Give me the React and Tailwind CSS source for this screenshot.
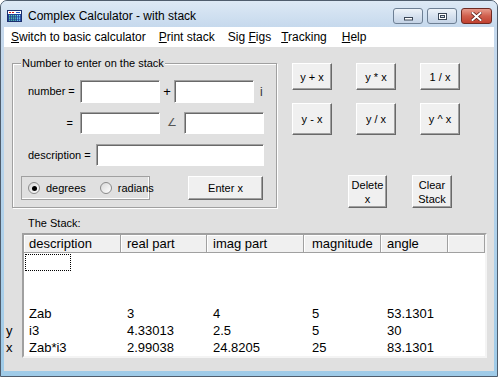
import React from 'react';

const font = "font-['Liberation_Sans',Arial,sans-serif]";
const raised =
  'bg-[#f0f0f0] border border-t-white border-l-white border-r-[#696969] border-b-[#696969] shadow-[inset_-1px_-1px_0_#a0a0a0]';
const sunken =
  'bg-white border border-t-[#a0a0a0] border-l-[#a0a0a0] border-r-white border-b-white shadow-[inset_1px_1px_0_#696969]';

const columns = [
  { title: 'description', w: 'w-[97px]', pl: 'pl-[5px]' },
  { title: 'real part', w: 'w-[86px]', pl: 'pl-[6px]' },
  { title: 'imag part', w: 'w-[97px]', pl: 'pl-[6px]' },
  { title: 'magnitude', w: 'w-[77px]', pl: 'pl-[8px]' },
  { title: 'angle', w: 'w-[67px]', pl: 'pl-[6px]' },
  { title: '', w: 'flex-1', pl: '' },
];

const stack = [
  ['Zab', '3', '4', '5', '53.1301'],
  ['i3', '4.33013', '2.5', '5', '30'],
  ['Zab*i3', '2.99038', '24.8205', '25', '83.1301'],
];

function AppIcon() {
  return (
    <svg width="15" height="12" viewBox="0 0 15 12" className="mr-[6px]">
      <rect x="0.5" y="0.5" width="14" height="11" fill="#1f3f9a" stroke="#1b2f6e" />
      <rect x="1" y="1" width="13" height="3" fill="#ffffff" />
      <rect x="2" y="2" width="2" height="1" fill="#d02020" />
      <rect x="5" y="2" width="2" height="1" fill="#d02020" />
      <rect x="9" y="2" width="4" height="1" fill="#2050c0" />
      {[0, 1, 2, 3].map((r) =>
        [0, 1, 2, 3, 4, 5].map((c) => (
          <rect key={r + '-' + c} x={2 + c * 2} y={5 + r * 1.6} width="1.2" height="1" fill={c > 3 ? '#7fe0ff' : '#5fd0a0'} />
        ))
      )}
    </svg>
  );
}

function CaptionButton({ kind }) {
  const base = 'h-[16px] flex items-center justify-center rounded-[3px] border';
  if (kind === 'close') {
    return (
      <div className={`${base} w-[31px] border-[#6e2a22] bg-gradient-to-b from-[#e69a8c] via-[#d0604e] to-[#c04030]`}>
        <svg width="11" height="9" viewBox="0 0 11 9">
          <path d="M1.5 1 L9.5 8 M9.5 1 L1.5 8" stroke="#5a1a14" strokeWidth="3.4" strokeLinecap="square" />
          <path d="M1.5 1 L9.5 8 M9.5 1 L1.5 8" stroke="#ffffff" strokeWidth="2" strokeLinecap="square" />
        </svg>
      </div>
    );
  }
  return (
    <div className={`${base} w-[30px] border-[#6d7f94] bg-gradient-to-b from-[#eef3f9] via-[#d7e2ef] to-[#c4d3e6]`}>
      {kind === 'min' ? (
        <svg width="11" height="9" viewBox="0 0 11 9">
          <rect x="1.5" y="5.5" width="8" height="2.5" fill="#ffffff" stroke="#3a4656" />
        </svg>
      ) : (
        <svg width="11" height="9" viewBox="0 0 11 9">
          <rect x="1.5" y="1.5" width="8" height="6" fill="none" stroke="#3a4656" />
          <rect x="2.5" y="2.5" width="6" height="4" fill="none" stroke="#ffffff" />
          <rect x="3.5" y="3.5" width="4" height="2" fill="none" stroke="#3a4656" />
        </svg>
      )}
    </div>
  );
}

function Btn({ className, children }) {
  return (
    <div className={`${raised} ${className} flex flex-col items-center justify-center text-[11px] leading-[14px] text-black`}>
      {children}
    </div>
  );
}

function Radio({ checked, label }) {
  return (
    <div className="flex items-center">
      <div className="w-[12px] h-[12px] rounded-full border border-[#8a8a8a] bg-gradient-to-br from-[#d8d8d8] to-white flex items-center justify-center">
        {checked && <div className="w-[5px] h-[5px] rounded-full bg-black" />}
      </div>
      <span className="ml-[6px] text-[11px]">{label}</span>
    </div>
  );
}

export default function App() {
  return (
    <div className={`${font} w-[498px] h-[377px] flex flex-col border border-[#4f5d6d] rounded-t-[7px] overflow-hidden bg-[#bcd4ec] text-black`}>
      {/* title bar */}
      <div className="h-[26px] pt-[4px] flex items-center pl-[6px] pr-[5px] bg-gradient-to-b from-[#dde9f5] to-[#c6d9ed]">
        <AppIcon />
        <span className="text-[12px] text-black">Complex Calculator - with stack</span>
        <div className="ml-auto flex items-center gap-[4px]">
          <CaptionButton kind="min" />
          <CaptionButton kind="max" />
          <CaptionButton kind="close" />
        </div>
      </div>

      <div className="flex-1 flex flex-col px-[3px] pb-[5px] bg-gradient-to-b from-[#c6d9ed] to-[#9fcbe8]">
        {/* menu */}
        <div className="h-[20px] bg-white flex items-center text-[12px] leading-[20px] pl-[7px]">
          <span><u>S</u>witch to basic calculator</span>
          <span className="ml-[13px]"><u>P</u>rint stack</span>
          <span className="ml-[13px]">Sig <u>F</u>igs</span>
          <span className="ml-[10px]"><u>T</u>racking</span>
          <span className="ml-[15px]"><u>H</u>elp</span>
        </div>

        {/* client */}
        <div className="flex-1 bg-[#e0e0e0] flex flex-col pt-[9px]">
          <div className="flex items-start pl-[8px]">
            <fieldset className="w-[265px] h-[152px] border border-[#a0a0a0] shadow-[inset_1px_1px_0_#fff,1px_1px_0_#fff] text-[11px]">
              <legend className="ml-[8px] px-[1px] leading-[14px] bg-[#e0e0e0]">Number to enter on the stack</legend>
              <div className="flex items-center h-[23px] mt-[10px]">
                <span className="w-[67px] pl-[15px]">number =</span>
                <div className={`${sunken} w-[80px] h-[23px]`} />
                <span className="w-[14px] text-center text-[13px]">+</span>
                <div className={`${sunken} w-[80px] h-[23px]`} />
                <span className="ml-[6px] text-[12px] text-[#333]">i</span>
              </div>
              <div className="flex items-center h-[22px] mt-[9px]">
                <span className="w-[67px] pr-[7px] text-right">=</span>
                <div className={`${sunken} w-[80px] h-[22px]`} />
                <span className="w-[24px] text-center text-[11px] text-[#555] font-['DejaVu_Sans',sans-serif]">∠</span>
                <div className={`${sunken} w-[80px] h-[22px]`} />
              </div>
              <div className="flex items-center h-[22px] mt-[10px]">
                <span className="w-[83px] pl-[15px]">description =</span>
                <div className={`${sunken} w-[168px] h-[22px]`} />
              </div>
              <div className="flex items-center h-[24px] mt-[10px]">
                <div className="ml-[8px] w-[129px] h-[24px] border border-[#a0a0a0] shadow-[inset_-1px_-1px_0_#fff] flex items-center pl-[6px] gap-[14px]">
                  <Radio checked label="degrees" />
                  <Radio label="radians" />
                </div>
                <Btn className="ml-[38px] w-[75px] h-[24px]">Enter x</Btn>
              </div>
            </fieldset>

            <div className="ml-[15px] mt-[7px] flex flex-col">
              <div className="flex gap-[24px]">
                <Btn className="w-[40px] h-[27px]">y + x</Btn>
                <Btn className="w-[40px] h-[27px]">y * x</Btn>
                <Btn className="w-[40px] h-[27px]">1 / x</Btn>
              </div>
              <div className="flex gap-[24px] mt-[13px]">
                <Btn className="w-[40px] h-[32px]">y - x</Btn>
                <Btn className="w-[40px] h-[32px]">y / x</Btn>
                <Btn className="w-[40px] h-[32px]">y ^ x</Btn>
              </div>
              <div className="flex gap-[25px] mt-[40px] pl-[56px]">
                <Btn className="w-[39px] h-[33px]"><span>Delete</span><span>x</span></Btn>
                <Btn className="w-[40px] h-[33px]"><span>Clear</span><span>Stack</span></Btn>
              </div>
            </div>
          </div>

          <div className="mt-[8px] pl-[24px] text-[11px] leading-[14px]">The Stack:</div>

          <div className="flex mt-[3px]">
            <div className="w-[18px] flex flex-col justify-end pb-[2px] pl-[2px] text-[13px] leading-[17px]">
              <div className="h-[17px]">y</div>
              <div className="h-[17px]">x</div>
            </div>
            <div className="w-[465px] border-2 border-t-[#a0a0a0] border-l-[#a0a0a0] border-r-[#f4f4f4] border-b-[#f4f4f4] bg-white text-[13px]">
              <div className="flex h-[18px]">
                {columns.map((c, i) => (
                  <div
                    key={i}
                    className={`${c.w} ${c.pl} h-[18px] leading-[17px] bg-[#f0f0f0] border-r border-b border-r-[#a0a0a0] border-b-[#a0a0a0] shadow-[inset_1px_1px_0_#fff] whitespace-nowrap`}
                  >
                    {c.title}
                  </div>
                ))}
              </div>
              <div className="pt-[1px] h-[103px] flex flex-col">
                <div className="h-[17px] flex">
                  <div className="ml-[1px] w-[46px] h-[17px] border border-dotted border-black" />
                </div>
                <div className="h-[17px]" />
                <div className="h-[17px]" />
                {stack.map((row, r) => (
                  <div key={r} className="h-[17px] flex leading-[17px]">
                    {row.map((v, i) => (
                      <div key={i} className={`${columns[i].w} ${columns[i].pl} whitespace-nowrap`}>
                        {v}
                      </div>
                    ))}
                  </div>
                ))}
              </div>
            </div>
          </div>
        </div>
      </div>
    </div>
  );
}
